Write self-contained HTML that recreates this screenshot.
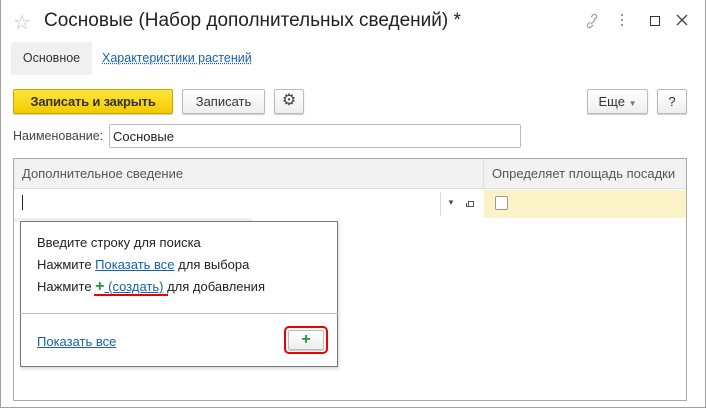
<!DOCTYPE html>
<html><head><meta charset="utf-8"><style>
*{box-sizing:border-box;margin:0;padding:0}
body{width:706px;height:414px;background:#fff;font-family:"Liberation Sans",sans-serif;font-size:12.5px;color:#333;position:relative;overflow:hidden}
.a{position:absolute}
.win{left:0;top:0;width:706px;height:408px;border:1px solid #a0a0a0;border-top:none}
.btn{position:absolute;border:1px solid #bbb;border-radius:2px;background:linear-gradient(#fff,#eee);box-shadow:0 1px 1px rgba(0,0,0,.2);font-size:13px;color:#333;text-align:center}
a{color:#1560b0;text-decoration:underline}
</style></head><body>
<div class="a win"></div>
<div class="a" style="left:13px;top:10px;font-size:20px;color:#bbb">☆</div>
<div class="a" style="left:44px;top:10px;font-size:19px;color:#222">Сосновые (Набор дополнительных сведений) *</div>
<svg class="a" style="left:582px;top:11px" width="20" height="20"><path d="M8 12l4-4M7 10l-2 2a2 2 0 0 0 3 3l2-2M11 8l2-2a2 2 0 0 0-3-3l-2 2" stroke="#999" fill="none" stroke-width="1.2" transform="translate(1,1)"/></svg>
<div class="a" style="left:621px;top:14px;width:2px;height:12px;background:repeating-linear-gradient(#999 0 2px,transparent 2px 5px)"></div>
<div class="a" style="left:650px;top:16px;width:10px;height:10px;border:1.5px solid #333"></div>
<svg class="a" style="left:676px;top:14px" width="12" height="12"><path d="M1 1L11 11M11 1L1 11" stroke="#444" stroke-width="1.3"/></svg>
<div class="a" style="left:11px;top:42px;width:81px;height:33px;background:#f0f0f0;border-radius:2px;line-height:33px;text-align:center;color:#333;font-size:12.5px">Основное</div>
<div class="a" style="left:102px;top:51px;font-size:12.5px"><a style="text-decoration-style:dotted">Характеристики растений</a></div>
<div class="btn" style="left:13px;top:89px;width:160px;height:25px;line-height:23px;background:linear-gradient(#ffe53a,#f2cb00);border-color:#c9a800;color:#333;font-weight:bold;letter-spacing:-0.2px">Записать и закрыть</div>
<div class="btn" style="left:182px;top:89px;width:83px;height:25px;line-height:23px">Записать</div>
<div class="btn" style="left:274px;top:89px;width:30px;height:25px;line-height:22px;font-size:16px;color:#444">⚙</div>
<div class="btn" style="left:587px;top:89px;width:61px;height:25px;line-height:23px">Еще <span style="font-size:8px;color:#777">▼</span></div>
<div class="btn" style="left:657px;top:89px;width:30px;height:25px;line-height:23px">?</div>
<div class="a" style="left:13px;top:129px;color:#444;font-size:12.5px">Наименование:</div>
<div class="a" style="left:109px;top:124px;width:412px;height:24px;border:1px solid #bbb;border-radius:2px;padding:4px 3px;color:#222;font-size:13px">Сосновые</div>
<div class="a" style="left:13px;top:158px;width:674px;height:243px;border:1px solid #aaa"></div>
<div class="a" style="left:14px;top:159px;width:672px;height:30px;background:#f2f2f2;border-bottom:1px solid #ddd"></div>
<div class="a" style="left:483px;top:159px;width:1px;height:30px;background:#ddd"></div>
<div class="a" style="left:22px;top:166px;color:#555;font-size:13px">Дополнительное сведение</div>
<div class="a" style="left:492px;top:166px;color:#555;font-size:13px">Определяет площадь посадки</div>
<div class="a" style="left:484px;top:190px;width:202px;height:28px;background:#fbf2c8"></div>
<div class="a" style="left:495px;top:196px;width:13px;height:14px;border:1px solid #999;border-radius:2px;background:#fff"></div>
<div class="a" style="left:22px;top:195px;width:1px;height:15px;background:#222"></div>
<div class="a" style="left:440px;top:192px;width:1px;height:24px;background:#ddd"></div>
<div class="a" style="left:447px;top:198px;font-size:8px;color:#555">▼</div>
<div class="a" style="left:468px;top:201px;width:6px;height:6px;border:1px solid #555"></div>
<div class="a" style="left:466px;top:203px;width:4px;height:4px;border-left:1px solid #555;border-bottom:1px solid #555"></div>
<div class="a" style="left:14px;top:218px;width:238px;height:4px;background:#eee"></div>
<div class="a" style="left:20px;top:221px;width:318px;height:146px;border:1px solid #777;background:#fff;box-shadow:1px 2px 3px rgba(0,0,0,.15)"></div>
<div class="a" style="left:20px;top:313px;width:318px;height:1px;background:#bbb"></div>
<div class="a" style="left:37px;top:232px;color:#222;line-height:22px;font-size:13px">Введите строку для поиска<br>Нажмите <a>Показать все</a> для выбора<br>Нажмите <span style="color:#1a9a3a;font-weight:bold;font-size:16px">+</span><a> (создать)</a> для добавления</div>
<div class="a" style="left:94px;top:294px;width:74px;height:2px;background:#e00"></div>
<div class="a" style="left:37px;top:334px;font-size:13px"><a>Показать все</a></div>
<div class="a" style="left:284px;top:326px;width:44px;height:28px;border:2px solid #e00;border-radius:5px"></div>
<div class="btn" style="left:288px;top:330px;width:36px;height:20px;line-height:18px;color:#1a9a3a;font-weight:bold;font-size:16px">+</div>
</body></html>
